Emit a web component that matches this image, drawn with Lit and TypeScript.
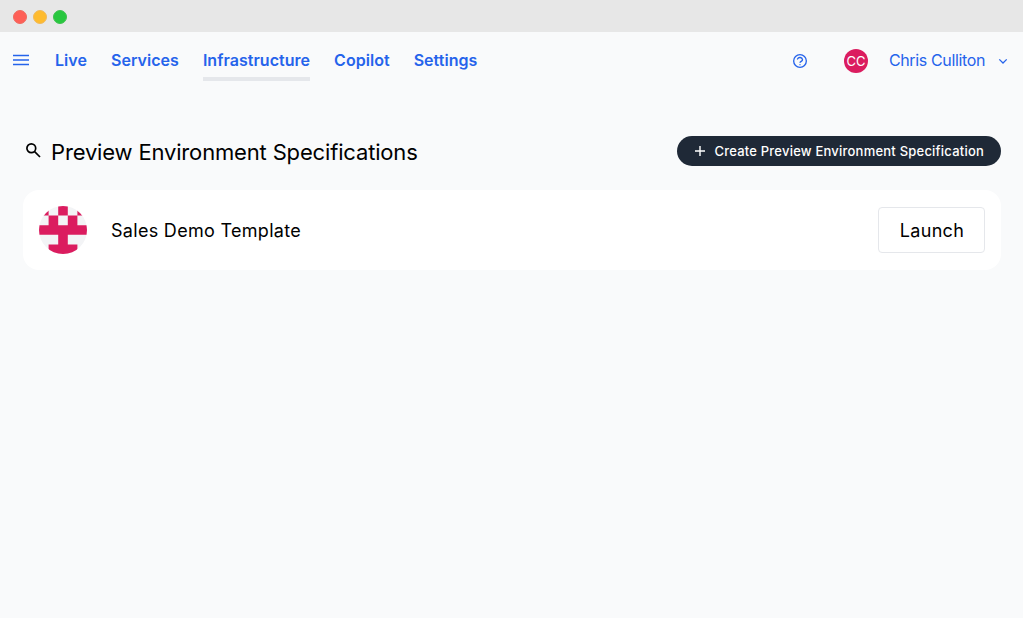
import { LitElement, html, css } from "lit";
import { customElement } from "lit/decorators.js";

const LOGO = "M19.2 0h9.6v9.6h-9.6zM0 0h9.6v9.6H0zM38.4 0H48v9.6h-9.6zM9.6 9.6h9.6v9.6H48v9.6H28.8v9.6h9.6V48H9.6v-9.6h9.6v-9.6H0v-9.6h9.6zM28.8 9.6h9.6v9.6h-9.6z";

@customElement("app-root")
export class AppRoot extends LitElement {
  static styles = css`
    :host {
      display: block;
      height: 618px;
      overflow: hidden;
      background: #f9fafb;
      font-family: Inter, "Noto Sans", sans-serif;
      color: #000;
    }
    .titlebar {
      height: 32px;
      background: #e7e7e7;
      display: flex;
      align-items: center;
      gap: 6px;
      padding: 2px 0 0 13px;
      box-sizing: border-box;
    }
    .dot { width: 14px; height: 14px; border-radius: 50%; box-sizing: border-box; }
    .red { background: #fe5f57; border: 1px solid #ee6a5f; }
    .amber { background: #febb2e; border: 1px solid #f0b95a; }
    .green { background: #28c73f; border: 1px solid #3ec14f; }
    .nav {
      height: 57px;
      display: flex;
      align-items: flex-start;
      padding: 0 14px 0 13px;
    }
    .menu { width: 16px; height: 12px; margin: 22px 26px 0 0; color: #2563eb; display: block; }
    .links { display: flex; gap: 24px; }
    .link {
      height: 49px;
      box-sizing: border-box;
      padding-top: 19px;
      font-size: 16px;
      line-height: 19px;
      font-weight: 600;
      color: #2563eb;
      letter-spacing: 0.04px;
      white-space: nowrap;
    }
    .link.active { border-bottom: 4px solid #e5e7eb; }
    .right { margin-left: auto; display: flex; align-items: center; height: 57px; color: #2563eb; }
    .help { width: 16px; height: 16px; display: block; margin-right: 36px; }
    .avatar {
      width: 24px; height: 24px; border-radius: 50%;
      background: #db1c5f; color: #fff;
      font-size: 13px; line-height: 24px; text-align: center;
      margin-right: 21px;
    }
    .user { font-size: 16px; line-height: 19px; letter-spacing: -0.36px; color: #2563eb; margin-right: 12px; white-space: nowrap; }
    .chev { width: 12px; height: 12px; display: block; }
    .content { padding: 47px 22px 0 23px; }
    .head { display: flex; align-items: center; justify-content: space-between; height: 30px; margin-bottom: 24px; }
    .title { display: flex; align-items: center; gap: 10px; font-size: 22px; line-height: 30px; letter-spacing: -0.16px; padding: 1px 0 0 2px; }
    .search { width: 16px; height: 16px; display: block; margin-top: -3px; }
    .create {
      height: 30px; border-radius: 15px; background: #1f2937; color: #fff;
      display: flex; align-items: center; gap: 8px;
      padding: 0 17px; font-size: 13px; font-weight: 500; letter-spacing: 0.22px; white-space: nowrap;
    }
    .plus { width: 12px; height: 12px; display: block; }
    .card {
      height: 80px; box-sizing: border-box; background: #fff; border-radius: 16px;
      display: flex; align-items: center; padding: 0 16px;
    }
    .logo { width: 48px; height: 48px; display: block; margin-right: 24px; }
    .name { font-size: 18px; line-height: 26px; letter-spacing: 0.3px; padding-top: 1px; flex: 1; }
    .launch {
      width: 107px; height: 46px; box-sizing: border-box;
      border: 1px solid #e5e7eb; border-radius: 4px; background: #fff;
      display: flex; align-items: center; justify-content: center;
      font-size: 18px; letter-spacing: 0.3px; padding-left: 1px;
    }
  `;

  render() {
    return html`
      <div class="titlebar">
        <div class="dot red"></div><div class="dot amber"></div><div class="dot green"></div>
      </div>
      <div class="nav">
        <svg class="menu" viewBox="0 0 16 12" fill="none" stroke="currentColor" stroke-width="1.6">
          <path d="M0 1.5h16M0 6h16M0 10.5h16" />
        </svg>
        <div class="links">
          <div class="link">Live</div>
          <div class="link">Services</div>
          <div class="link active">Infrastructure</div>
          <div class="link">Copilot</div>
          <div class="link">Settings</div>
        </div>
        <div class="right">
          <svg class="help" viewBox="0 0 24 24" fill="none" stroke="currentColor" stroke-width="2" stroke-linecap="round" stroke-linejoin="round">
            <path d="M8.23 9a4 4 0 0 1 7.54 1c0 2-3 2.6-3.6 4" />
            <path d="M12 17.5v.01" />
            <circle cx="12" cy="12" r="9.5" />
          </svg>
          <div class="avatar">CC</div>
          <div class="user">Chris Culliton</div>
          <svg class="chev" viewBox="0 0 12 12" fill="none" stroke="currentColor" stroke-width="1.3">
            <path d="M2.3 4.4l3.7 3.6 3.7-3.6" />
          </svg>
        </div>
      </div>
      <div class="content">
        <div class="head">
          <div class="title">
            <svg class="search" viewBox="0 0 16 16" fill="none" stroke="#000" stroke-width="1.7">
              <circle cx="6.3" cy="6.3" r="4.4" />
              <path d="M9.6 9.6L15 15" />
            </svg>
            Preview Environment Specifications
          </div>
          <div class="create">
            <svg class="plus" viewBox="0 0 12 12" fill="none" stroke="#fff" stroke-width="1.4"><path d="M6 1v10M1 6h10" /></svg>
            Create Preview Environment Specification
          </div>
        </div>
        <div class="card">
          <svg class="logo" viewBox="0 0 48 48">
            <defs><clipPath id="c"><circle cx="24" cy="24" r="24" /></clipPath></defs>
            <g clip-path="url(#c)">
              <rect width="48" height="48" fill="#f3f4f6" />
              <path d=${LOGO} fill="#db1c5f" />
            </g>
          </svg>
          <div class="name">Sales Demo Template</div>
          <div class="launch">Launch</div>
        </div>
      </div>
    `;
  }
}
